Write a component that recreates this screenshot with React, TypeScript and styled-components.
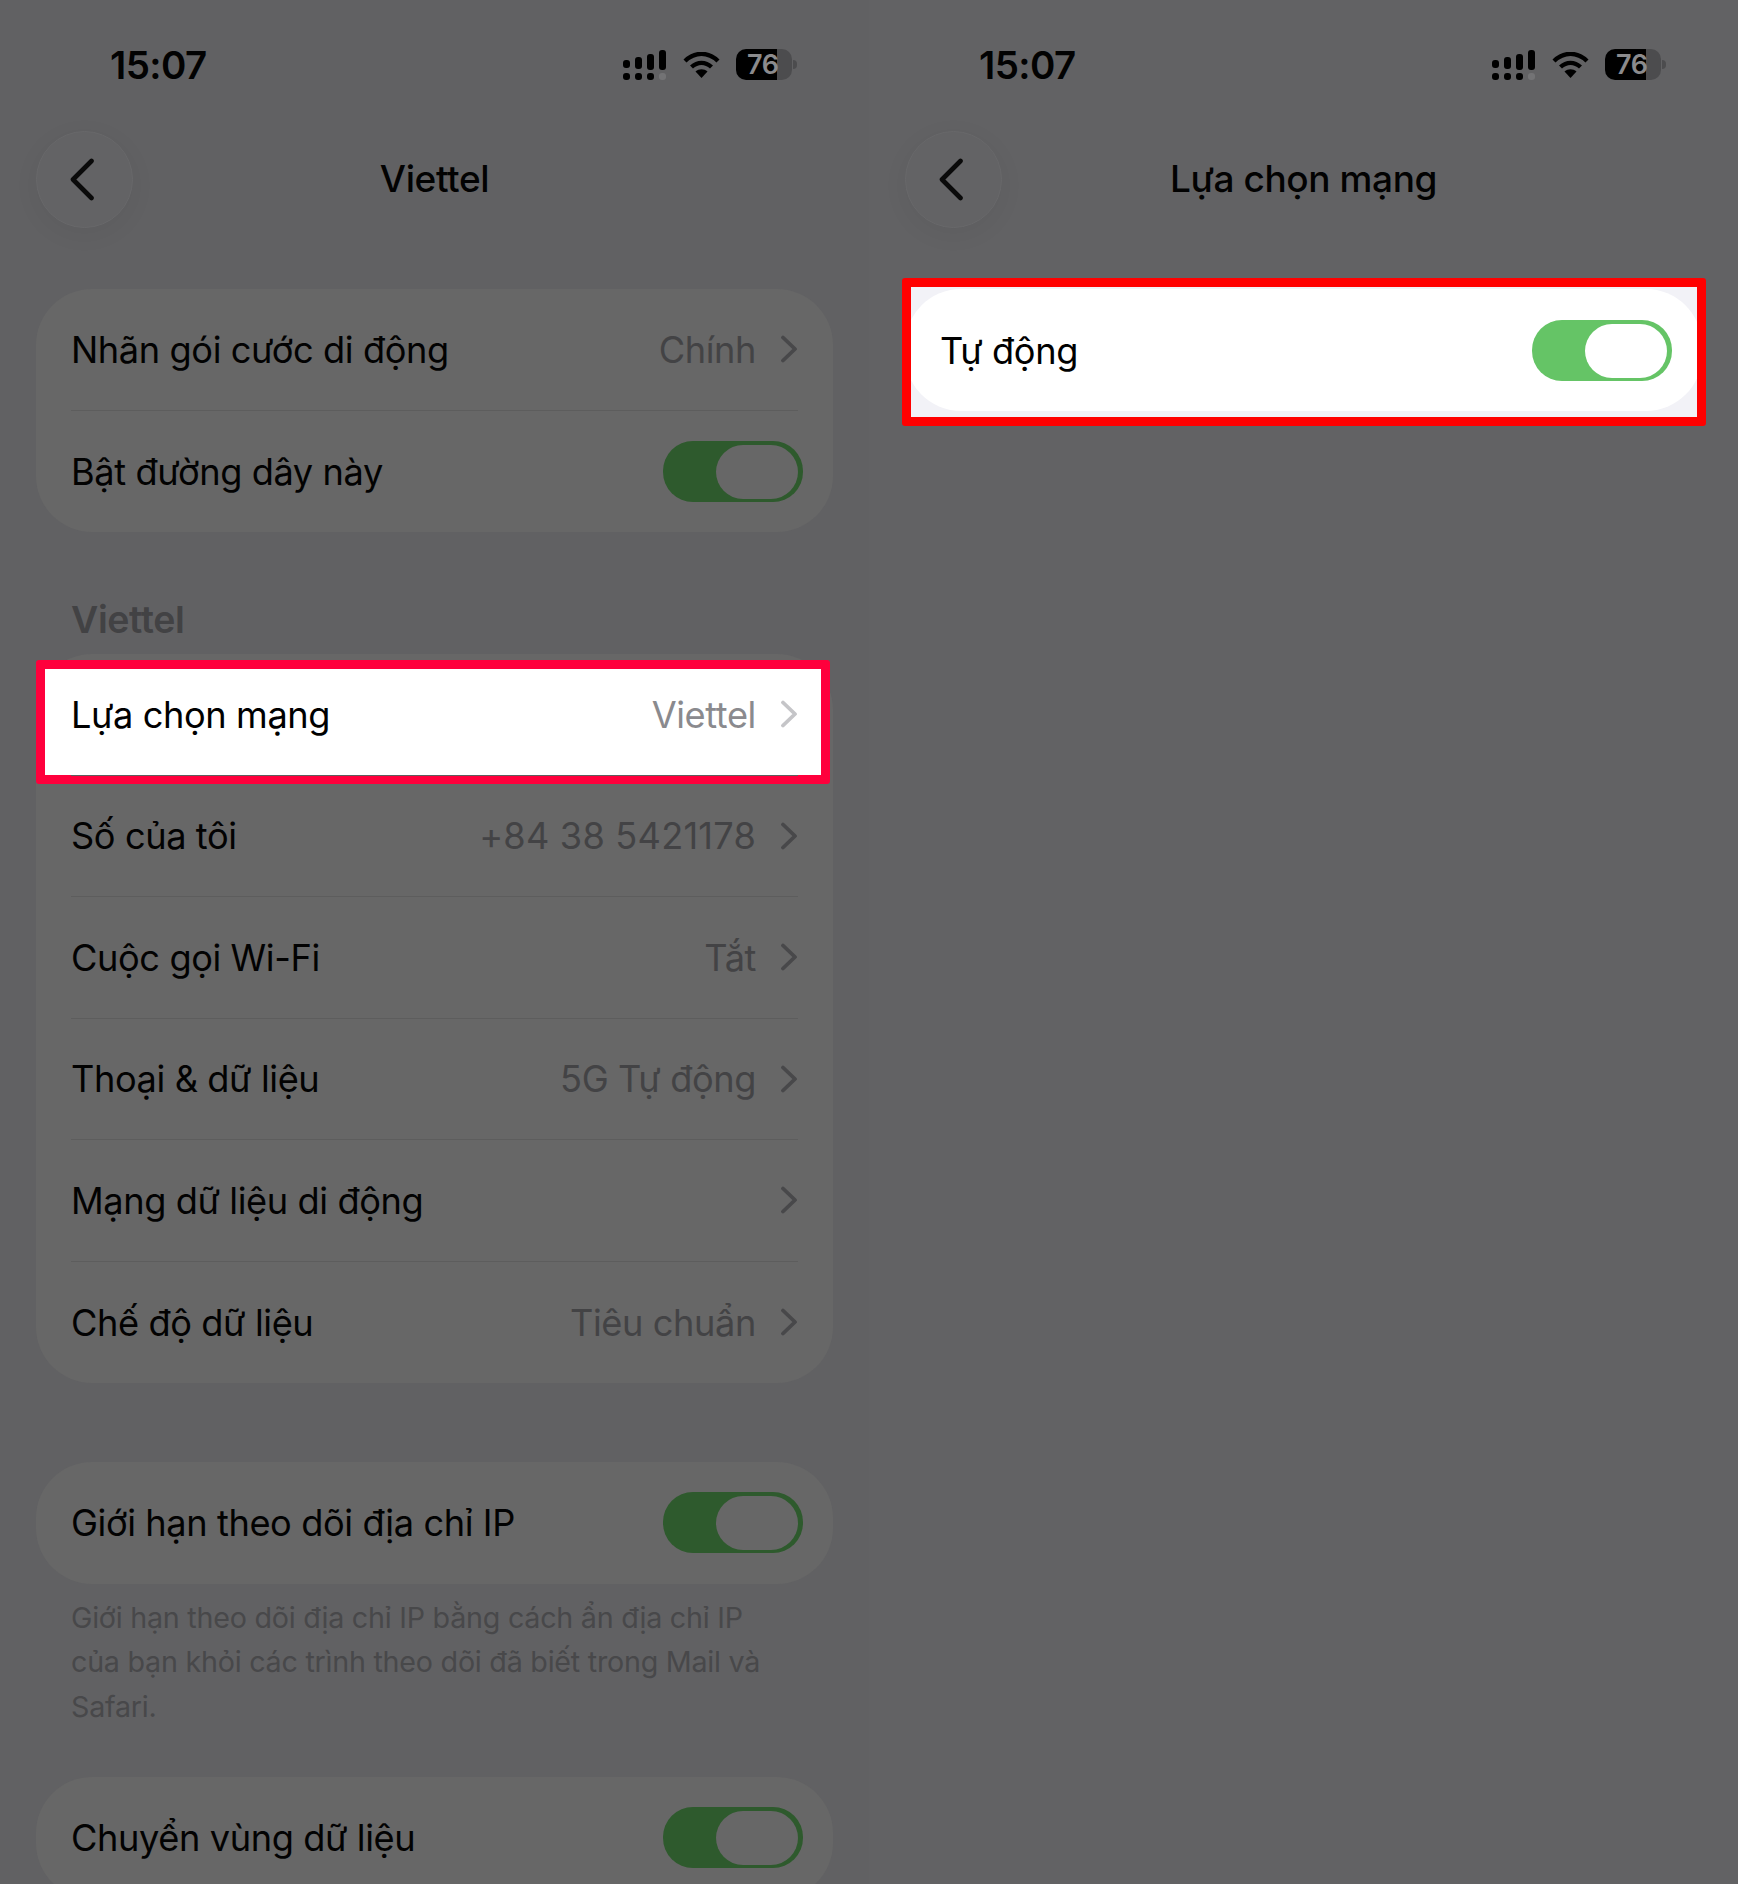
import React from 'react'
import styled, { createGlobalStyle } from 'styled-components'

const FONT = '"Inter", "Noto Sans", "Liberation Sans", sans-serif'

const GlobalStyle = createGlobalStyle`
	html, body {
		margin: 0;
		padding: 0;
		background: #626264;
	}
	* {
		box-sizing: border-box;
	}
`

const Chevron: React.FC<{ $light?: boolean }> = ({ $light }) => (
	<ChevronIcon viewBox="0 0 18 28" fill="none">
		<path
			d="M3 2.5 L15 14 L3 25.5"
			stroke={$light ? '#c5c5c8' : '#48484a'}
			strokeWidth="3.8"
			strokeLinecap="round"
			strokeLinejoin="round"
		/>
	</ChevronIcon>
)

const SignalIcon = () => (
	<StatusSvg width="43" height="30" viewBox="0 0 43 30" fill="#000">
		<rect x="0" y="10" width="7" height="8" rx="3" />
		<rect x="12" y="7" width="7" height="12" rx="3" />
		<rect x="24" y="4" width="7" height="16" rx="3" />
		<rect x="36" y="0" width="7" height="20" rx="3" />
		<rect x="0" y="23" width="7" height="7" rx="3" />
		<rect x="12" y="23" width="7" height="7" rx="3" />
		<rect x="24" y="23" width="7" height="7" rx="3" />
		<rect x="36" y="23" width="7" height="7" rx="3" fill="#737375" />
	</StatusSvg>
)

const WifiIcon = () => (
	<StatusSvg width="37" height="26" viewBox="0 0 37 26" fill="none">
		<path d="M2 9 C12 -0.5 25 -0.5 35 9" stroke="#000" strokeWidth="4.4" />
		<path d="M8.5 15 C14.5 9.5 22.5 9.5 28.5 15" stroke="#000" strokeWidth="4.4" />
		<path d="M18.5 26 L12.5 19.5 C16 16.5 21 16.5 24.5 19.5 Z" fill="#000" />
	</StatusSvg>
)

const StatusIcons = () => (
	<Icons>
		<SignalIcon />
		<WifiIcon />
		<Battery>76</Battery>
	</Icons>
)

const Switch: React.FC<{ $bright?: boolean }> = ({ $bright }) => (
	<Track $bright={$bright}>
		<Knob $bright={$bright} />
	</Track>
)

interface LinkRowProps {
	label: string
	value?: string
	$highlight?: boolean
	$digits?: boolean
}

const LinkRow: React.FC<LinkRowProps> = ({ label, value, $highlight, $digits }) => (
	<Row $highlight={$highlight}>
		<RowInner>
			<Label>{label}</Label>
			<Trailing>
				{value && (
					<Value $light={$highlight} $digits={$digits}>
						{value}
					</Value>
				)}
				<Chevron $light={$highlight} />
			</Trailing>
		</RowInner>
	</Row>
)

const ToggleRow: React.FC<{ label: string }> = ({ label }) => (
	<Row>
		<RowInner>
			<Label>{label}</Label>
			<Switch />
		</RowInner>
	</Row>
)

const TopBars: React.FC<{ title: string }> = ({ title }) => (
	<>
		<StatusBar>
			<Time>15:07</Time>
			<StatusIcons />
		</StatusBar>
		<Header>
			<BackButton>
				<svg width="26" height="43" viewBox="0 0 26 43" fill="none">
					<path
						d="M22.5 3 L4 21.5 L22.5 40"
						stroke="#0a0a0a"
						strokeWidth="4.6"
						strokeLinecap="round"
						strokeLinejoin="round"
					/>
				</svg>
			</BackButton>
			<Title>{title}</Title>
		</Header>
	</>
)

const App: React.FC = () => {
	return (
		<Page lang="vi">
			<GlobalStyle />
			<Panel>
				<TopBars title="Viettel" />
				<Card $top={61}>
					<LinkRow label="Nhãn gói cước di động" value="Chính" />
					<ToggleRow label="Bật đường dây này" />
				</Card>
				<SectionLabel>Viettel</SectionLabel>
				<Card>
					<LinkRow label="Lựa chọn mạng" value="Viettel" $highlight />
					<LinkRow label="Số của tôi" value="+84 38 5421178" $digits />
					<LinkRow label="Cuộc gọi Wi-Fi" value="Tắt" />
					<LinkRow label="Thoại & dữ liệu" value="5G Tự động" />
					<LinkRow label="Mạng dữ liệu di động" />
					<LinkRow label="Chế độ dữ liệu" value="Tiêu chuẩn" />
				</Card>
				<Card $top={79}>
					<ToggleRow label="Giới hạn theo dõi địa chỉ IP" />
				</Card>
				<Footnote>
					Giới hạn theo dõi địa chỉ IP bằng cách ẩn địa chỉ IP
					<br />
					của bạn khỏi các trình theo dõi đã biết trong Mail và
					<br />
					Safari.
				</Footnote>
				<Card>
					<ToggleRow label="Chuyển vùng dữ liệu" />
				</Card>
			</Panel>
			<Panel $right>
				<TopBars title="Lựa chọn mạng" />
				<Callout>
					<BrightCard>
						<BrightRow>
							<Label>Tự động</Label>
							<Switch $bright />
						</BrightRow>
					</BrightCard>
				</Callout>
			</Panel>
		</Page>
	)
}

export default App

const Page = styled.div`
	width: 1738px;
	height: 1884px;
	display: grid;
	grid-template-columns: 869px 869px;
	overflow: hidden;
	font-family: ${FONT};
	color: #020202;
`

const Panel = styled.div<{ $right?: boolean }>`
	height: 1884px;
	padding: 0 36px;
	overflow: hidden;
	background: ${({ $right }) => ($right ? '#626264' : '#616163')};
`

const StatusBar = styled.div`
	height: 131px;
	display: flex;
	justify-content: space-between;
	padding: 49px 0 0 74px;
	align-items: flex-start;
`

const Time = styled.div`
	font-size: 38.5px;
	font-weight: 600;
	line-height: 32px;
	letter-spacing: -0.6px;
`

const Icons = styled.div`
	display: flex;
	align-items: center;
	gap: 16.5px;
	margin-right: 41px;
`

const StatusSvg = styled.svg`
	display: block;
`

const Battery = styled.div`
	position: relative;
	width: 56px;
	height: 31px;
	padding-left: 11px;
	border-radius: 10px;
	background: linear-gradient(90deg, #000 0 73%, #4c4c4e 73% 100%);
	color: #8b8b8d;
	font-size: 27px;
	font-weight: 600;
	line-height: 31px;
	letter-spacing: -0.5px;

	&::after {
		content: '';
		position: absolute;
		right: -5px;
		top: 11px;
		width: 4px;
		height: 9px;
		border-radius: 0 5px 5px 0;
		background: #4c4c4e;
	}
`

const Header = styled.div`
	position: relative;
	height: 97px;
	display: flex;
	align-items: center;
	justify-content: center;
`

const BackButton = styled.div`
	position: absolute;
	left: 0;
	top: 0;
	width: 97px;
	height: 97px;
	display: flex;
	align-items: center;
	justify-content: center;
	padding-right: 6px;
	border-radius: 50%;
	background: #636365;
	border: 1.5px solid #68686a;
	box-shadow: 0 6px 26px rgba(0, 0, 0, 0.05);
`

const Title = styled.div`
	padding-bottom: 2px;
	font-size: 37px;
	font-weight: 500;
	letter-spacing: -0.4px;
	line-height: 44px;
`

const Card = styled.div<{ $top?: number }>`
	width: 797px;
	border-radius: 56px;
	background: #676767;
	margin-top: ${({ $top }) => $top ?? 0}px;
`

const SectionLabel = styled.div`
	height: 122px;
	padding: 66px 0 0 35px;
	font-size: 37.5px;
	font-weight: 600;
	line-height: 44px;
	letter-spacing: -0.4px;
	color: #424244;
`

const Row = styled.div<{ $highlight?: boolean }>`
	position: relative;
	height: 121.5px;
	padding: 0 35px;

	${({ $highlight }) =>
		$highlight &&
		`
		color: #000;
		&::before {
			content: '';
			position: absolute;
			left: 0;
			right: 3px;
			top: 6px;
			bottom: -8.5px;
			background: #fff;
			border: 9px solid #ff003c;
			border-radius: 3px;
		}
	`}
`

const RowInner = styled.div`
	position: relative;
	height: 100%;
	display: flex;
	align-items: center;
	justify-content: space-between;
	border-bottom: 1.5px solid #5d5d5d;

	${Row}:last-child > & {
		border-bottom: none;
	}
`

const Label = styled.div`
	padding-top: 1px;
	font-size: 36.2px;
	line-height: 44px;
	letter-spacing: -0.4px;
	white-space: nowrap;
`

const Trailing = styled.div`
	display: flex;
	align-items: center;
	gap: 24px;
`

const Value = styled.div<{ $light?: boolean; $digits?: boolean }>`
	padding-top: 1px;
	font-size: 36.2px;
	line-height: 44px;
	letter-spacing: ${({ $digits }) => ($digits ? '0.2px' : '-0.4px')};
	color: ${({ $light }) => ($light ? '#8a8a8e' : '#434345')};
`

const ChevronIcon = styled.svg`
	display: block;
	width: 18px;
	height: 28px;
`

const Track = styled.div<{ $bright?: boolean }>`
	width: 140px;
	height: 61px;
	margin-right: -5px;
	padding: 4px 5px 3px 0;
	display: flex;
	justify-content: flex-end;
	border-radius: 30px;
	background: ${({ $bright }) => ($bright ? '#65c466' : '#2e5a2d')};
`

const Knob = styled.div<{ $bright?: boolean }>`
	width: 82px;
	height: 54px;
	border-radius: 27px;
	background: ${({ $bright }) => ($bright ? '#ffffff' : '#676767')};
`

const Footnote = styled.div`
	margin-top: 12px;
	margin-bottom: 48px;
	padding-left: 35px;
	font-size: 28.7px;
	line-height: 44.5px;
	letter-spacing: -0.25px;
	color: #48484a;
	white-space: nowrap;
`

const Callout = styled.div`
	width: 804px;
	height: 148px;
	margin: 50px 0 0 -3px;
	border: 9px solid #ff0000;
	border-radius: 3px;
	background: #f2f2f7;
	overflow: hidden;
`

const BrightCard = styled.div`
	width: 797px;
	height: 122px;
	margin: 2px 0 0 -6px;
	border-radius: 56px;
	background: #ffffff;
	color: #000;
`

const BrightRow = styled.div`
	height: 100%;
	padding: 0 35px;
	display: flex;
	align-items: center;
	justify-content: space-between;
`
